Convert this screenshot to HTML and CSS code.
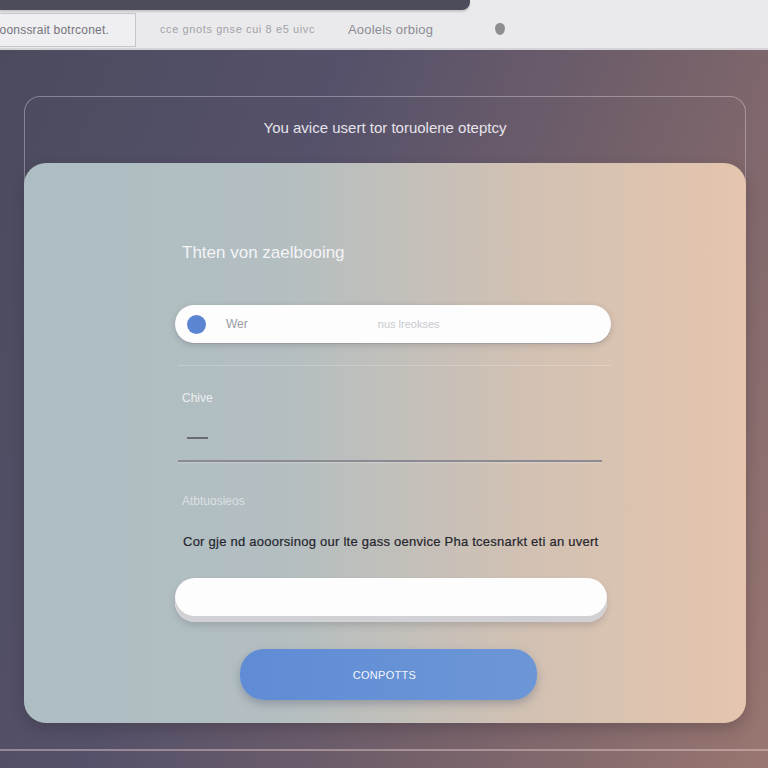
FILE: index.html
```html
<!DOCTYPE html>
<html>
<head>
<meta charset="utf-8">
<link rel="stylesheet" href="styles.css">
</head>
<body>
<header class="topbar">
  <div class="topstrip"></div>
  <div class="toprow">
    <div class="tab-box">oonssrait botrconet.</div>
    <span class="tab-text">cce gnots gnse cui 8 e5 uivc</span>
    <span class="tab-text dark">Aoolels orbiog</span>
    <span class="tab-dot"></span>
  </div>
</header>
<main class="stage">
  <section class="outer">
    <div class="outer-title">You avice usert tor toruolene oteptcy</div>
    <div class="card">
      <div class="form">
        <h1 class="heading">Thten von zaelbooing</h1>
        <div class="pill search">
          <span class="dot"></span>
          <span class="val">Wer</span>
          <span class="ph">nus lreokses</span>
        </div>
        <div class="sep"></div>
        <div class="label">Chive</div>
        <div class="dash"></div>
        <div class="rule"></div>
        <div class="label second">Atbtuosieos</div>
        <p class="para">Cor gje nd aooorsinog our lte gass oenvice Pha tcesnarkt eti an uvert</p>
        <div class="pill plain"></div>
        <div class="btn-row"><button class="btn">CONPOTTS</button></div>
      </div>
    </div>
  </section>
  <div class="bottomline"></div>
</main>
</body>
</html>
```

FILE: styles.css
```css
* { box-sizing: border-box; }
html, body { margin: 0; padding: 0; }
body {
  width: 768px;
  height: 768px;
  overflow: hidden;
  font-family: "Liberation Sans", Arial, sans-serif;
  background: linear-gradient(110deg, #4a4b5d 0%, #55516a 35%, #73606a 65%, #997670 100%);
}
.topbar {
  height: 50px;
  background: #eaeaec;
  border-bottom: 2px solid #d4d4d8;
  display: flex;
  flex-direction: column;
}
.topstrip {
  width: 470px;
  height: 10px;
  background: #4c4c5a;
  border-bottom-right-radius: 8px;
  box-shadow: 0 2px 2px rgba(0,0,0,0.15);
}
.toprow {
  display: flex;
  align-items: center;
  height: 38px;
}
.tab-box {
  width: 136px;
  height: 34px;
  margin-top: 2px;
  border: 1px solid #c6c6cb;
  border-left: none;
  background: #efeff1;
  display: flex;
  align-items: center;
  font-size: 12px;
  letter-spacing: 0.2px;
  color: #74747c;
  white-space: nowrap;
  overflow: hidden;
  justify-content: flex-end;
  padding-right: 26px;
}
.tab-text {
  margin-left: 24px;
  font-size: 11px;
  letter-spacing: 0.6px;
  color: #a2a2a8;
  white-space: nowrap;
}
.tab-text.dark {
  margin-left: 33px;
  font-size: 13px;
  letter-spacing: 0.2px;
  color: #8c8c94;
}
.tab-dot {
  width: 10px;
  height: 12px;
  margin-left: 62px;
  border-radius: 50% 50% 50% 50% / 40% 40% 60% 60%;
  background: #8d8d92;
}
.stage {
  padding: 46px 22px 0 24px;
}
.outer {
  border: 1px solid rgba(255,255,255,0.32);
  border-bottom: none;
  border-radius: 16px 16px 22px 22px;
}
.outer-title {
  height: 66px;
  display: flex;
  align-items: center;
  justify-content: center;
  color: #e6e4ea;
  font-size: 15px;
  padding-bottom: 6px;
}
.card {
  height: 560px;
  margin: 0 -1px;
  border-radius: 22px;
  background: linear-gradient(90deg, #adbec3 0%, #b3bec1 35%, #d2c1b3 70%, #e5c5ad 100%);
  box-shadow: 0 6px 14px rgba(40,30,40,0.25);
  padding: 80px 0 0 151px;
}
.form {
  width: 436px;
  display: flex;
  flex-direction: column;
}
.heading {
  margin: 0 0 0 7px;
  height: 20px;
  line-height: 20px;
  font-size: 17px;
  font-weight: normal;
  color: #f4f4f6;
}
.pill {
  border-radius: 19px;
  background: #fdfdfd;
}
.search {
  margin-top: 42px;
  height: 38px;
  display: flex;
  align-items: center;
  box-shadow: 0 2px 6px rgba(80,80,90,0.25), 0 1px 0 rgba(150,150,160,0.4);
}
.dot {
  width: 19px;
  height: 19px;
  border-radius: 50%;
  background: #5b85d2;
  margin-left: 12px;
}
.val {
  margin-left: 20px;
  font-size: 12px;
  color: #9a9aa2;
}
.ph {
  margin-left: 130px;
  font-size: 11px;
  color: #c9c9ce;
}
.sep {
  margin-top: 22px;
  margin-left: 3px;
  height: 1px;
  background: rgba(255,255,255,0.22);
}
.label {
  margin: 25px 0 0 7px;
  height: 14px;
  line-height: 14px;
  font-size: 12px;
  color: #eceef0;
}
.dash {
  margin: 32px 0 0 12px;
  width: 21px;
  height: 2px;
  background: #6b6b74;
}
.rule {
  margin: 21px 0 0 3px;
  width: 424px;
  height: 2px;
  background: #8c8a92;
  box-shadow: 0 1px 2px rgba(255,255,255,0.25);
}
.label.second {
  margin-top: 32px;
  color: #dde0e3;
}
.para {
  margin: 26px 0 0 8px;
  height: 16px;
  line-height: 16px;
  font-size: 13px;
  letter-spacing: 0.25px;
  color: #26262e;
  white-space: nowrap;
  -webkit-text-stroke: 0.2px #26262e;
}
.plain {
  margin-top: 28px;
  width: 432px;
  height: 44px;
  border-radius: 20px;
  background: #d1d1d5;
  box-shadow: inset 0 -6px 0 #d1d1d5, inset 0 38px 0 #fdfdfd, 0 4px 6px rgba(80,80,90,0.2);
}
.btn-row {
  margin-top: 27px;
  padding-left: 65px;
}
.btn {
  width: 297px;
  height: 51px;
  border: none;
  border-radius: 24px;
  background: linear-gradient(90deg, #5f8cd5, #6c96d6);
  color: #f4f6fb;
  font-family: "Liberation Sans", Arial, sans-serif;
  font-size: 11px;
  letter-spacing: 0.3px;
  box-shadow: 0 4px 8px rgba(60,70,100,0.3);
  padding-right: 14px;
}
.bottomline {
  margin: 26px -24px 0 -24px;
  height: 2px;
  background: rgba(230,205,205,0.45);
}
```
